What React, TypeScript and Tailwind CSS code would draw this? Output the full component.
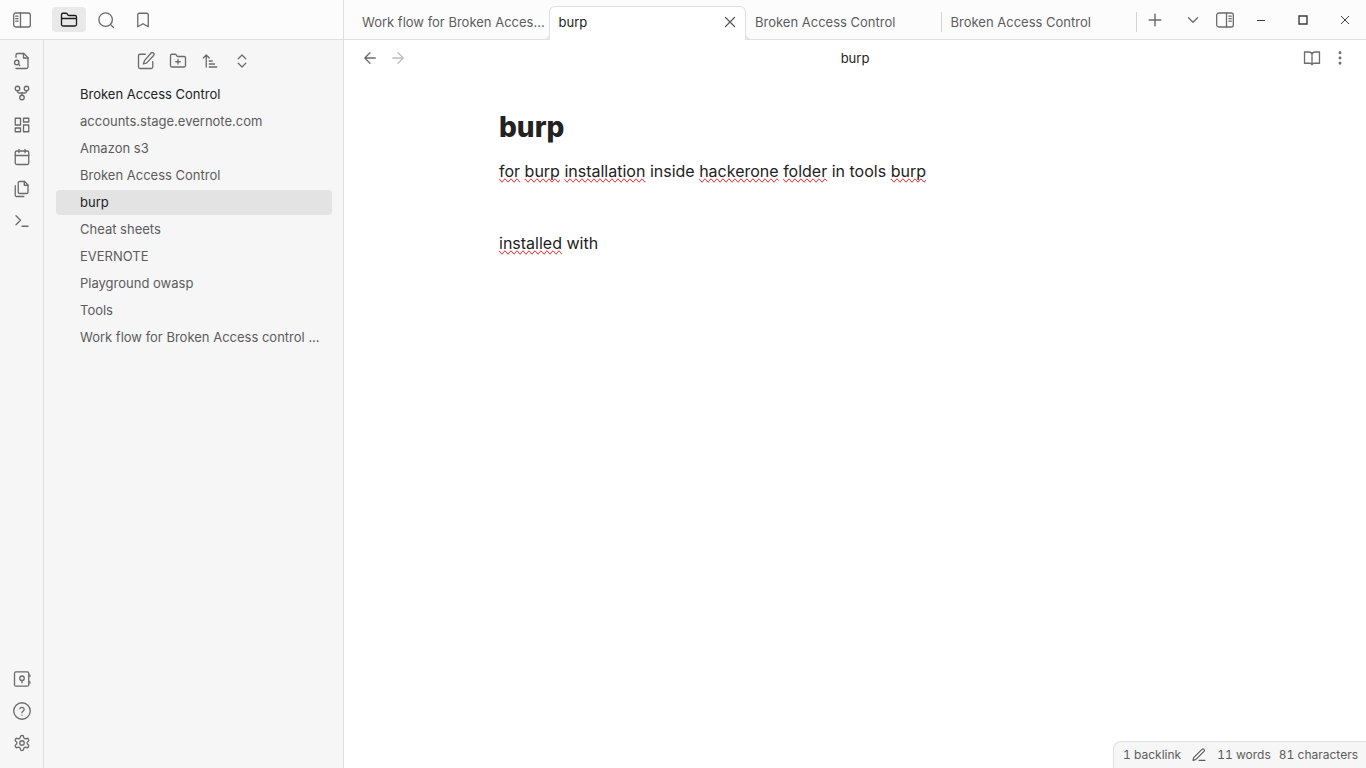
import type { ReactNode } from "react";

type IconProps = { children: ReactNode; className?: string };

function Icon({ children, className = "size-[18px]" }: IconProps) {
  return (
    <svg
      viewBox="0 0 24 24"
      fill="none"
      stroke="currentColor"
      strokeWidth="1.75"
      strokeLinecap="round"
      strokeLinejoin="round"
      aria-hidden="true"
      className={`shrink-0 ${className}`}
    >
      {children}
    </svg>
  );
}

const ribbonTop = [
  {
    label: "Open quick switcher",
    icon: (
      <>
        <path d="M4 22h14a2 2 0 0 0 2-2V7.5L14.5 2H6a2 2 0 0 0-2 2v3" />
        <path d="M14 2v6h6" />
        <circle cx="5" cy="14" r="3" />
        <path d="m9 18-1.5-1.5" />
      </>
    ),
  },
  {
    label: "Open graph view",
    icon: (
      <>
        <circle cx="12" cy="18" r="3" />
        <circle cx="6" cy="6" r="3" />
        <circle cx="18" cy="6" r="3" />
        <path d="M18 9v1a2 2 0 0 1-2 2H8a2 2 0 0 1-2-2V9" />
        <path d="M12 12v3" />
      </>
    ),
  },
  {
    label: "Create new canvas",
    icon: (
      <>
        <rect x="3" y="3" width="7" height="9" />
        <rect x="14" y="3" width="7" height="5" />
        <rect x="14" y="12" width="7" height="9" />
        <rect x="3" y="16" width="7" height="5" />
      </>
    ),
  },
  {
    label: "Open daily note",
    icon: (
      <>
        <rect x="3" y="4" width="18" height="18" rx="2" />
        <path d="M16 2v4M8 2v4M3 10h18" />
      </>
    ),
  },
  {
    label: "Insert template",
    icon: (
      <>
        <path d="M15.5 2H8.6c-.4 0-.8.2-1.1.5-.3.3-.5.7-.5 1.1v12.8c0 .4.2.8.5 1.1.3.3.7.5 1.1.5h9.8c.4 0 .8-.2 1.1-.5.3-.3.5-.7.5-1.1V6.5L15.5 2z" />
        <path d="M3 7.6v12.8c0 .4.2.8.5 1.1.3.3.7.5 1.1.5h9.8" />
        <path d="M15 2v5h5" />
      </>
    ),
  },
  { label: "Open command palette", icon: <path d="m4 17 6-6-6-6M12 19h8" /> },
];

const ribbonBottom = [
  {
    label: "Open another vault",
    icon: (
      <>
        <rect x="2" y="2.5" width="19" height="19" rx="2" />
        <circle cx="12" cy="11" r="3" />
        <path d="M12 14v3M22.5 6.5v2M22.5 15.5v2" />
      </>
    ),
  },
  {
    label: "Help",
    icon: (
      <>
        <circle cx="12" cy="12" r="11" />
        <path d="M9.1 9a3 3 0 0 1 5.8 1c0 2-3 2.6-3 4.4M12 17.5h.01" />
      </>
    ),
  },
  {
    label: "Settings",
    icon: (
      <>
        <path d="M12.22 2h-.44a2 2 0 0 0-2 2v.18a2 2 0 0 1-1 1.73l-.43.25a2 2 0 0 1-2 0l-.15-.08a2 2 0 0 0-2.73.73l-.22.38a2 2 0 0 0 .73 2.73l.15.1a2 2 0 0 1 1 1.72v.51a2 2 0 0 1-1 1.74l-.15.09a2 2 0 0 0-.73 2.73l.22.38a2 2 0 0 0 2.73.73l.15-.08a2 2 0 0 1 2 0l.43.25a2 2 0 0 1 1 1.73V20a2 2 0 0 0 2 2h.44a2 2 0 0 0 2-2v-.18a2 2 0 0 1 1-1.73l.43-.25a2 2 0 0 1 2 0l.15.08a2 2 0 0 0 2.73-.73l.22-.39a2 2 0 0 0-.73-2.73l-.15-.08a2 2 0 0 1-1-1.74v-.5a2 2 0 0 1 1-1.74l.15-.09a2 2 0 0 0 .73-2.73l-.22-.38a2 2 0 0 0-2.73-.73l-.15.08a2 2 0 0 1-2 0l-.43-.25a2 2 0 0 1-1-1.73V4a2 2 0 0 0-2-2z" />
        <circle cx="12" cy="12" r="3" />
      </>
    ),
  },
];

const explorerActions = [
  {
    label: "New note",
    icon: (
      <>
        <path d="M11 3H4a2 2 0 0 0-2 2v15a2 2 0 0 0 2 2h15a2 2 0 0 0 2-2v-7" />
        <path d="M18.5 1.6a2.12 2.12 0 0 1 3.6 3L13 14.5l-4.5 1.5 1.5-4.5z" />
      </>
    ),
  },
  {
    label: "New folder",
    icon: (
      <>
        <path d="M4 20h16a2 2 0 0 0 2-2V8a2 2 0 0 0-2-2h-7.93a2 2 0 0 1-1.66-.9l-.82-1.2A2 2 0 0 0 7.93 3H4a2 2 0 0 0-2 2v13c0 1.1.9 2 2 2Z" />
        <path d="M12 10v6M9 13h6" />
      </>
    ),
  },
  {
    label: "Change sort order",
    icon: <path d="m3 8 4-4 4 4M7 4v16M11 12h4M11 16h7M11 20h10" />,
  },
  { label: "Expand all", icon: <path d="m7 15 5 5 5-5M7 9l5-5 5 5" /> },
];

const files = [
  "accounts.stage.evernote.com",
  "Amazon s3",
  "Broken Access Control",
  "burp",
  "Cheat sheets",
  "EVERNOTE",
  "Playground owasp",
  "Tools",
  "Work flow for Broken Access control ...",
];

function PanelIcon({ side }: { side: "left" | "right" }) {
  return (
    <svg
      viewBox="0 0 18 16"
      fill="none"
      stroke="currentColor"
      strokeWidth="1.3"
      strokeLinecap="round"
      aria-hidden="true"
      className="h-4 w-[18px] shrink-0"
    >
      <rect x="0.7" y="1" width="16.6" height="14" rx="2" />
      {side === "left" ? (
        <path d="M7.5 1v14M2.7 4.2h2.4M2.7 6.7h2.4M2.7 9.2h2.4" />
      ) : (
        <path d="M10.5 1v14M12.9 4.2h2.4M12.9 6.7h2.4M12.9 9.2h2.4" />
      )}
    </svg>
  );
}

function RibbonButton({ label, icon }: { label: string; icon: ReactNode }) {
  return (
    <button type="button" aria-label={label} className="flex h-7 w-8 items-center justify-center">
      <Icon>{icon}</Icon>
    </button>
  );
}

function Misspelt({ children }: { children: string }) {
  return <span className="[text-decoration-line:spelling-error]">{children}</span>;
}

function InactiveTab({ title, divider }: { title: string; divider?: boolean }) {
  return (
    <div className="flex h-9 min-w-0 flex-1 items-center">
      <button type="button" role="tab" aria-selected="false" className="min-w-0 flex-1 truncate pl-[9px] text-left">
        {title}
      </button>
      {divider && <span className="h-5 w-px bg-[#d4d4d4]" />}
    </div>
  );
}

function ActiveTab({ title }: { title: string }) {
  return (
    <div className="relative flex h-[34px] min-w-0 flex-1 items-center rounded-t-md border border-b-0 border-[#e0e0e0] bg-white pb-[3px] text-[#222222]">
      <span className="absolute bottom-0 -left-[6px] size-[6px] rounded-br-md border-r border-b border-[#e0e0e0] bg-[#fcfcfc]" />
      <span className="absolute -right-[6px] bottom-0 size-[6px] rounded-bl-md border-b border-l border-[#e0e0e0] bg-[#fcfcfc]" />
      <button type="button" role="tab" aria-selected="true" className="min-w-0 flex-1 truncate pl-[9px] text-left">
        {title}
      </button>
      <button type="button" aria-label="Close tab" className="mr-[6px] text-[#5a5a5a]">
        <Icon>
          <path d="M18 6 6 18M6 6l12 12" />
        </Icon>
      </button>
    </div>
  );
}

export default function App() {
  return (
    <div className="flex h-screen flex-col overflow-hidden bg-white font-[Inter,sans-serif] text-[13px] leading-5 text-[#5c5c5c]">
      <header className="flex h-10 shrink-0 bg-[#fcfcfc]">
        <div className="flex w-[344px] shrink-0 items-center border-r border-b border-[#e0e0e0] text-[#6b6b6b]">
          <button type="button" aria-label="Collapse sidebar" className="flex w-11 justify-center">
            <PanelIcon side="left" />
          </button>
          <nav className="ml-2 flex gap-[3px]" aria-label="Sidebar views">
            <button type="button" aria-label="Files" className="flex h-[25px] w-[34px] items-center justify-center rounded bg-[#e9e9e9] text-[#1c1c1c]">
              <Icon>
                <path d="M4 20h16a2 2 0 0 0 2-2V8a2 2 0 0 0-2-2h-7.93a2 2 0 0 1-1.66-.9l-.82-1.2A2 2 0 0 0 7.93 3H4a2 2 0 0 0-2 2v13c0 1.1.9 2 2 2ZM2 10h20" />
              </Icon>
            </button>
            <button type="button" aria-label="Search" className="flex h-[25px] w-[34px] items-center justify-center">
              <Icon>
                <circle cx="11.5" cy="11.5" r="9" />
                <path d="m22 22-3.8-3.8" />
              </Icon>
            </button>
            <button type="button" aria-label="Bookmarks" className="flex h-[25px] w-[34px] items-center justify-center">
              <Icon>
                <path d="m19 21-7-4-7 4V5a2 2 0 0 1 2-2h10a2 2 0 0 1 2 2z" />
              </Icon>
            </button>
          </nav>
        </div>

        <div className="flex min-w-0 flex-1">
          <span className="w-[9px] shrink-0 border-b border-[#e0e0e0]" />
          <div role="tablist" className="flex min-w-0 flex-1 items-end bg-[linear-gradient(#e0e0e0,#e0e0e0)] bg-[length:100%_1px] bg-bottom bg-no-repeat">
            <div className="flex min-w-0 flex-1 self-start pt-1">
              <InactiveTab title="Work flow for Broken Acces..." />
            </div>
            <ActiveTab title="burp" />
            <div className="flex min-w-0 flex-1 self-start pt-1">
              <InactiveTab title="Broken Access Control" divider />
            </div>
            <div className="flex min-w-0 flex-1 self-start pt-1">
              <InactiveTab title="Broken Access Control" divider />
            </div>
          </div>
          <div className="flex shrink-0 items-center border-b border-[#e0e0e0] text-[#6b6b6b]">
            <button type="button" aria-label="New tab" className="flex w-9 justify-center">
              <Icon className="size-5">
                <path d="M12 5v14M5 12h14" />
              </Icon>
            </button>
            <button type="button" aria-label="Tab list" className="flex w-10 justify-center">
              <Icon>
                <path d="m6 9 6 6 6-6" />
              </Icon>
            </button>
            <button type="button" aria-label="Expand right panel" className="mr-[3px] flex w-6 justify-center">
              <PanelIcon side="right" />
            </button>
            <div className="flex text-[#3c3c3c]">
              <button type="button" aria-label="Minimize" className="flex w-[42px] justify-center">
                <svg viewBox="0 0 10 10" className="size-[10px]" stroke="currentColor" aria-hidden="true">
                  <path d="M1 5.5h8" />
                </svg>
              </button>
              <button type="button" aria-label="Maximize" className="flex w-[42px] justify-center">
                <svg viewBox="0 0 10 10" className="size-[10px]" fill="none" stroke="currentColor" aria-hidden="true">
                  <path d="M1 1h8v8H1z" strokeWidth="1.4" />
                </svg>
              </button>
              <button type="button" aria-label="Close" className="flex w-[42px] justify-center">
                <svg viewBox="0 0 10 10" className="size-[10px]" stroke="currentColor" aria-hidden="true">
                  <path d="m1 1 8 8M9 1 1 9" />
                </svg>
              </button>
            </div>
          </div>
        </div>
      </header>

      <div className="flex min-h-0 flex-1">
        <nav aria-label="Ribbon" className="flex w-11 shrink-0 flex-col items-center justify-between border-r border-[#e0e0e0] bg-[#f6f6f6] pt-[7px] pb-[11px] text-[#6b6b6b]">
          <div className="flex flex-col gap-1">
            {ribbonTop.map((item) => (
              <RibbonButton key={item.label} {...item} />
            ))}
          </div>
          <div className="flex flex-col gap-1">
            {ribbonBottom.map((item) => (
              <RibbonButton key={item.label} {...item} />
            ))}
          </div>
        </nav>

        <aside className="flex w-[300px] shrink-0 flex-col border-r border-[#e0e0e0] bg-[#f6f6f6] px-3 pt-[7px]">
          <div className="flex justify-center text-[#6b6b6b]">
            {explorerActions.map((item) => (
              <RibbonButton key={item.label} {...item} />
            ))}
          </div>
          <h2 className="mt-[7px] mb-[2px] pr-2 pl-6 leading-[25px] text-[#222222]">Broken Access Control</h2>
          <ul className="mr-[-1px] flex flex-col gap-[2px]">
            {files.map((name) => (
              <li key={name}>
                <button
                  type="button"
                  className={`block w-full truncate rounded pr-2 pl-6 text-left leading-[25px] ${
                    name === "burp" ? "bg-[#e3e3e3] text-[#222222]" : ""
                  }`}
                >
                  {name}
                </button>
              </li>
            ))}
          </ul>
        </aside>

        <main className="flex min-w-0 flex-1 flex-col">
          <div className="flex h-9 shrink-0 items-center justify-between px-3 text-[#6b6b6b]">
            <div className="flex">
              <button type="button" aria-label="Back" className="flex w-7 justify-center">
                <Icon>
                  <path d="M19 12H5M12 19l-7-7 7-7" />
                </Icon>
              </button>
              <button type="button" aria-label="Forward" className="flex w-7 justify-center text-[#bdbdbd]">
                <Icon>
                  <path d="M5 12h14M12 5l7 7-7 7" />
                </Icon>
              </button>
            </div>
            <span className="text-[#222222]">burp</span>
            <div className="flex">
              <button type="button" aria-label="Reading view" className="flex w-7 justify-center">
                <Icon>
                  <path d="M2 4h6a4 4 0 0 1 4 3v14a3 3 0 0 0-3-2H2zM22 4h-6a4 4 0 0 0-4 3v14a3 3 0 0 1 3-2h7z" />
                </Icon>
              </button>
              <button type="button" aria-label="More options" className="flex w-7 justify-center">
                <Icon>
                  <circle cx="12" cy="12" r="1" />
                  <circle cx="12" cy="5" r="1" />
                  <circle cx="12" cy="19" r="1" />
                </Icon>
              </button>
            </div>
          </div>

          <article className="mx-auto w-full max-w-[712px] flex-1 pt-[33px] text-base leading-6 text-[#222222]">
            <h1 className="mb-[14px] text-[28px] leading-9 font-extrabold">burp</h1>
            <p>
              <Misspelt>for</Misspelt> <Misspelt>burp</Misspelt> <Misspelt>installation</Misspelt> inside{" "}
              <Misspelt>hackerone</Misspelt> <Misspelt>folder</Misspelt> in tools <Misspelt>burp</Misspelt>
            </p>
            <p className="mt-12">
              <Misspelt>installed</Misspelt> with
            </p>
          </article>

          <footer className="flex h-[27px] items-center gap-2 self-end rounded-tl-lg border-t border-l border-[#e0e0e0] bg-[#f6f6f6] pr-2 pl-[9px] text-xs tabular-nums">
            <span>1 backlink</span>
            <button type="button" aria-label="Editing mode" className="mx-[2px]">
              <Icon className="size-4">
                <path d="M12 20h9M16.5 3.5a2.12 2.12 0 0 1 3 3L7 19l-4 1 1-4Z" />
              </Icon>
            </button>
            <span>11 words</span>
            <span>81 characters</span>
          </footer>
        </main>
      </div>
    </div>
  );
}
